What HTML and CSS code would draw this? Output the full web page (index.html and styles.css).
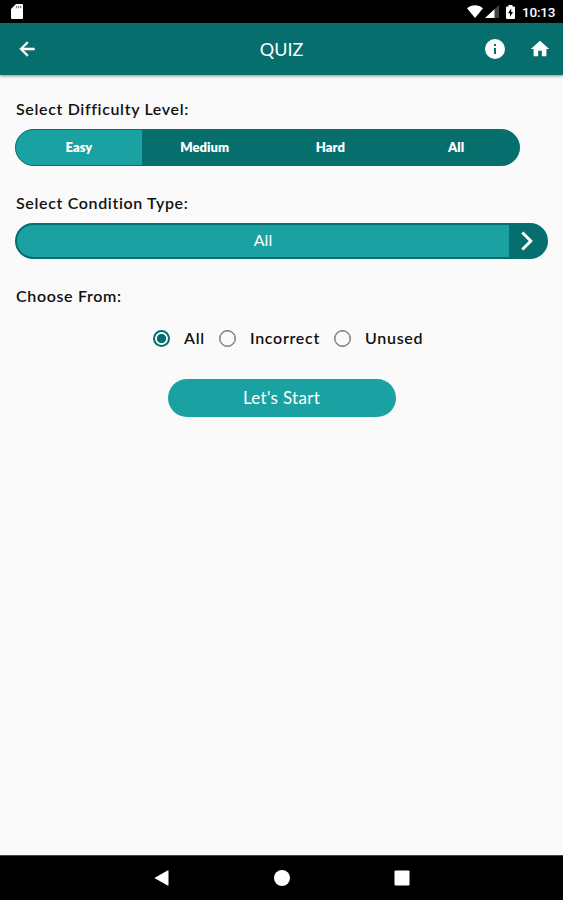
FILE: index.html
```
<!DOCTYPE html>
<html lang="en">
<head>
    <meta charset="UTF-8">
    <meta name="viewport" content="width=device-width, initial-scale=1.0">
    <title>Quiz</title>
    <link rel="stylesheet" href="styles.css">
</head>
<body>
    <div class="status-bar">
        <svg class="sd-card" width="12" height="15" viewBox="0 0 12 15">
            <path fill="#fff" d="M5 0h6a1 1 0 0 1 1 1v13a1 1 0 0 1-1 1H1a1 1 0 0 1-1-1V5z"/>
            <path fill="#888" d="M5 1.700h1.300v2.500H5zM7 1.700h1.300v2.500H7zM9 1.700h1.300v2.500H9z"/>
        </svg>
        <div class="status-icons">
            <svg class="wifi" width="16" height="13" viewBox="0 0 16 13">
                <path fill="#fff" d="M8 13L0 3.200C4.500-.9 11.500-.9 16 3.200z"/>
            </svg>
            <svg class="signal" width="14" height="13" viewBox="0 0 14 13">
                <path fill="#444" d="M14 0v13H0z"/>
                <path fill="#fff" d="M9.500 4.200V13H0z"/>
            </svg>
            <svg class="battery" width="9" height="14" viewBox="0 0 9 14">
                <path fill="#fff" d="M2.500 0h4v1.500H8a1 1 0 0 1 1 1V13a1 1 0 0 1-1 1H1a1 1 0 0 1-1-1V2.500a1 1 0 0 1 1-1h1.500z"/>
                <path fill="#000" d="M5.200 3.500L2 8.300h2v3.400l3-4.800H5.200z"/>
            </svg>
            <span class="clock">10:13</span>
        </div>
    </div>

    <header class="toolbar">
        <svg class="back" width="22" height="22" viewBox="0 0 24 24">
            <path fill="#fff" stroke="#fff" stroke-width="0.700" d="M20 11H7.830l5.590-5.590L12 4l-8 8 8 8 1.410-1.410L7.830 13H20z"/>
        </svg>
        <h1>QUIZ</h1>
        <div class="actions">
            <svg width="24" height="24" viewBox="0 0 24 24">
                <path fill="#fff" d="M12 2a10 10 0 1 0 0 20 10 10 0 0 0 0-20zm1 15h-2v-6h2zm0-8h-2V7h2z"/>
            </svg>
            <svg width="22" height="22" viewBox="0 0 24 24">
                <path fill="#fff" d="M10 20v-6h4v6h5v-8h3L12 3 2 12h3v8z"/>
            </svg>
        </div>
    </header>

    <main class="content">
        <h2>Select Difficulty Level:</h2>
        <div class="levels">
            <div class="level active">Easy</div>
            <div class="level">Medium</div>
            <div class="level">Hard</div>
            <div class="level">All</div>
        </div>

        <h2>Select Condition Type:</h2>
        <div class="select">
            <div class="select-value">All</div>
            <div class="select-arrow">
                <svg width="12" height="20" viewBox="0 0 12 20">
                    <path fill="none" stroke="#fff" stroke-width="3" d="M1.300 1.500L9.800 10l-8.500 8.500"/>
                </svg>
            </div>
        </div>

        <h2>Choose From:</h2>
        <div class="choices">
            <div class="choice choice-all"><span class="radio checked"></span>All</div>
            <div class="choice choice-incorrect"><span class="radio"></span>Incorrect</div>
            <div class="choice choice-unused"><span class="radio"></span>Unused</div>
        </div>

        <button class="start">Let's Start</button>
    </main>

    <footer class="nav-bar">
        <svg width="16" height="16" viewBox="0 0 16 16">
            <path fill="#fff" d="M14.500 1v14a.6.600 0 0 1-.9.500L1.200 8.600a.7.700 0 0 1 0-1.200L13.600.5a.6.600 0 0 1 .9.500z"/>
        </svg>
        <svg width="16" height="16" viewBox="0 0 16 16">
            <circle fill="#fff" cx="8" cy="8" r="8"/>
        </svg>
        <svg width="16" height="16" viewBox="0 0 16 16">
            <rect fill="#fff" x="0.500" y="0.500" width="15" height="15" rx="1"/>
        </svg>
    </footer>
</body>
</html>
```
FILE: styles.css
```
* {
    box-sizing: border-box;
}
body {
    margin: 0;
    height: 900px;
    display: flex;
    flex-direction: column;
    font-family: Lato, "Open Sans", sans-serif;
    background-color: #fafafa;
    color: #111;
    overflow: hidden;
}
svg {
    display: block;
}
.status-bar {
    height: 23px;
    padding: 0 8px 0 11px;
    display: flex;
    align-items: center;
    justify-content: space-between;
    background: #000;
    color: #fff;
}
.status-icons {
    display: flex;
    align-items: center;
}
.signal {
    margin-left: 2px;
}
.battery {
    margin-left: 7px;
}
.clock {
    width: 33px;
    margin-left: 7px;
    font: 500 13.5px/20px Roboto, sans-serif;
    letter-spacing: -0.2px;
    white-space: nowrap;
}
.toolbar {
    height: 52px;
    padding: 0 12px 0 16px;
    display: grid;
    grid-template-columns: 68px 1fr 68px;
    align-items: center;
    background: #076e6e;
    color: #fff;
    box-shadow: 0 1px 3px rgba(0, 0, 0, 0.45);
}
.toolbar h1 {
    margin: 0 0 1px -4px;
    font-size: 18px;
    font-weight: 400;
    text-align: center;
}
.actions {
    display: flex;
    align-items: center;
    justify-content: space-between;
}
.content {
    flex: 1;
    padding: 24px 15px 0;
}
.content h2 {
    margin: 0;
    padding-left: 1px;
    font-size: 16px;
    line-height: 20px;
    font-weight: 600;
    letter-spacing: 0.65px;
    white-space: nowrap;
}
.levels {
    width: 505px;
    height: 37px;
    margin: 10px 0 27px;
    display: flex;
    border: 1px solid #076e6e;
    border-radius: 19px;
    background: #076e6e;
    overflow: hidden;
}
.level {
    flex: 1;
    line-height: 35px;
    color: #fff;
    font-size: 13px;
    font-weight: 800;
    text-align: center;
}
.level.active {
    background: #1aa2a2;
}
.select {
    height: 36px;
    margin: 10px 0 27px;
    display: flex;
    border: 2px solid #076e6e;
    border-radius: 18px;
    background: #076e6e;
    overflow: hidden;
}
.select-value {
    flex: 1;
    line-height: 30px;
    background: #1aa2a2;
    color: #fff;
    font-size: 16px;
    text-align: center;
}
.select-arrow {
    width: 37px;
    padding-right: 1px;
    display: flex;
    align-items: center;
    justify-content: center;
}
.choices {
    display: flex;
    margin: 22px 0 0 138px;
}
.choice {
    display: flex;
    align-items: center;
    font-size: 16px;
    font-weight: 600;
    line-height: 20px;
    letter-spacing: 0.7px;
}
.choice-all {
    width: 66px;
}
.choice-incorrect {
    width: 115px;
}
.radio {
    width: 17px;
    height: 17px;
    margin-right: 14px;
    border: 1.5px solid #707070;
    border-radius: 50%;
    box-shadow: inset 0 0 0 0.5px #707070;
}
.radio.checked {
    border: 2px solid #076e6e;
    background: radial-gradient(circle, #076e6e 4.3px, #fafafa 5px);
    box-shadow: none;
}
.start {
    display: block;
    width: 228px;
    height: 38px;
    margin: 31px auto 0;
    padding: 0 0 2px;
    border: none;
    border-radius: 19px;
    background: #1aa2a2;
    color: #fff;
    font-family: inherit;
    font-size: 17px;
    letter-spacing: 0.3px;
}
.nav-bar {
    height: 45px;
    display: flex;
    align-items: center;
    justify-content: center;
    gap: 104px;
    background: #000;
    border-top: 1px solid #444;
}
```
